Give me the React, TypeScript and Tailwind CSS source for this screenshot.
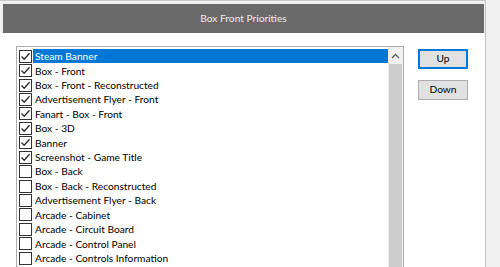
import React from 'react';

const items = [
  { label: 'Steam Banner', checked: true },
  { label: 'Box - Front', checked: true },
  { label: 'Box - Front - Reconstructed', checked: true },
  { label: 'Advertisement Flyer - Front', checked: true },
  { label: 'Fanart - Box - Front', checked: true },
  { label: 'Box - 3D', checked: true },
  { label: 'Banner', checked: true },
  { label: 'Screenshot - Game Title', checked: true },
  { label: 'Box - Back', checked: false },
  { label: 'Box - Back - Reconstructed', checked: false },
  { label: 'Advertisement Flyer - Back', checked: false },
  { label: 'Arcade - Cabinet', checked: false },
  { label: 'Arcade - Circuit Board', checked: false },
  { label: 'Arcade - Control Panel', checked: false },
  { label: 'Arcade - Controls Information', checked: false },
];

const CheckBox = ({ checked }: { checked: boolean }) => (
  <div className="w-[13px] h-[13px] border border-[#333333] bg-white flex items-center justify-center shrink-0">
    {checked && (
      <svg width="11" height="11" viewBox="0 0 11 11">
        <path d="M1.5 5.5 L4.2 8.3 L9.5 2.2" fill="none" stroke="#2b2b2b" strokeWidth="1.3" />
      </svg>
    )}
  </div>
);

const App = () => {
  return (
    <div className="w-[500px] h-[267px] bg-[#f0f0f0] overflow-hidden" style={{ fontFamily: 'Lato, "Liberation Sans", sans-serif' }}>
      <div className="w-[486px] h-full bg-white border-r border-[#c4c4c4] flex flex-col">
        {/* title strip */}
        <div className="bg-[#f0f0f0] border-t border-[#c8c8c8] pt-[3px] pl-[3px] pr-[1px]">
          <div className="h-[29px] bg-[#696969] flex items-center justify-center text-[10.2px] text-[#ececec]">
            Box Front Priorities
          </div>
        </div>

        <div className="flex items-start pl-[16px] pt-[13px]">
          {/* list */}
          <div className="w-[388px] h-[260px] border border-[#adadad] flex shrink-0">
            <div className="flex-1 pt-[2px] pl-[2px]">
              {items.map((item, i) => (
                <div key={item.label} className="h-[14.43px] flex items-center">
                  <CheckBox checked={item.checked} />
                  <div
                    className={`ml-[1px] h-full flex items-center pl-[2px] text-[10.2px] leading-none ${
                      i === 0 ? 'flex-1 bg-[#0078d7] text-white' : 'text-black'
                    }`}
                  >
                    {item.label}
                  </div>
                </div>
              ))}
            </div>
            {/* scrollbar */}
            <div className="w-[15px] bg-[#f0f0f0] flex flex-col">
              <div className="h-[17px] flex items-center justify-center">
                <svg width="9" height="6" viewBox="0 0 9 6">
                  <path d="M1 5 L4.5 1.5 L8 5" fill="none" stroke="#606060" strokeWidth="1.3" />
                </svg>
              </div>
              <div className="flex-1 mx-[1px] bg-[#cdcdcd]" />
            </div>
          </div>

          {/* buttons */}
          <div className="ml-[14px] mt-[3px] flex flex-col gap-[11px]">
            <button className="w-[50px] h-[20px] bg-[#e1e1e1] border-2 border-[#0078d7] text-[10.2px] text-black flex items-center justify-center">
              Up
            </button>
            <button className="w-[50px] h-[20px] bg-[#e1e1e1] border border-[#adadad] text-[10.2px] text-black flex items-center justify-center">
              Down
            </button>
          </div>
        </div>
      </div>
    </div>
  );
};

export default App;
